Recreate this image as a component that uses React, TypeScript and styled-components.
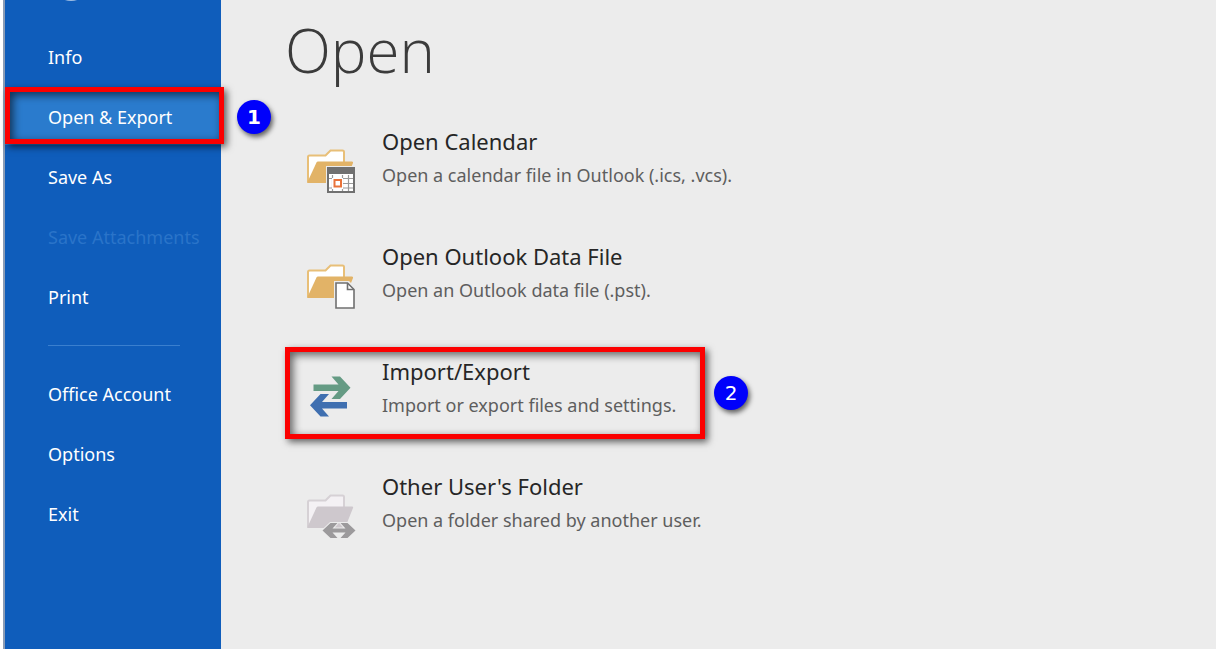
import React from "react";
import styled, { createGlobalStyle } from "styled-components";

const GlobalStyle = createGlobalStyle`
  * { box-sizing: border-box; }
  html, body, #root { height: 100%; }
  body {
    margin: 0;
    background: #ffffff;
    font-family: "Noto Sans", "Open Sans", sans-serif;
  }
  button { font: inherit; border: 0; margin: 0; cursor: pointer; }
  button:disabled { cursor: default; }
`;

const Backstage = styled.div`
  display: flex;
  height: 100%;
  padding: 0 0 1px 3px;
`;

const Sidebar = styled.nav`
  flex: 0 0 218px;
  display: flex;
  flex-direction: column;
  background: #0f5dbb;
  border-left: 2px solid #8b9cb5;
`;

const BackRow = styled.div`
  height: 29px;
  padding-left: 48px;
  overflow: hidden;
  display: flex;
  align-items: flex-start;
`;

const BackButton = styled.button`
  width: 36px;
  height: 36px;
  padding: 0;
  margin-top: -35px;
  border: 2px solid rgba(255, 255, 255, 0.6);
  border-radius: 50%;
  background: transparent;
`;

const NavList = styled.ul`
  display: flex;
  flex-direction: column;
  gap: 4px;
  margin: 0;
  padding: 0;
  list-style: none;
`;

const NavItem = styled.li`
  position: relative;
`;

const NavButton = styled.button<{ $active?: boolean }>`
  display: block;
  width: 100%;
  height: 56px;
  padding: 0 0 0 43px;
  text-align: left;
  white-space: nowrap;
  font-size: 18px;
  line-height: 24px;
  color: #ffffff;
  background: ${(p) => (p.$active ? "#2a7bcd" : "transparent")};
  &:disabled { color: #2a74c9; }
`;

const Divider = styled.hr`
  width: 132px;
  height: 1px;
  margin: 20px 0 20px 43px;
  border: 0;
  background: #3a7fce;
`;

const Content = styled.main`
  flex: 1;
  min-width: 0;
  padding: 10px 0 0 64px;
  background: #ececec;
`;

const Title = styled.h1`
  margin: 0 0 27px;
  font-family: "Open Sans", "Noto Sans", sans-serif;
  font-size: 60px;
  font-weight: 300;
  line-height: 80px;
  color: #3b3b3b;
`;

const ActionList = styled.ul`
  display: flex;
  flex-direction: column;
  align-items: flex-start;
  gap: 23px;
  margin: 0;
  padding: 0;
  list-style: none;
`;

const ActionItem = styled.li`
  position: relative;
`;

const ActionButton = styled.button`
  display: flex;
  align-items: center;
  gap: 26px;
  min-width: 420px;
  height: 92px;
  padding: 0 0 0 21px;
  text-align: left;
  white-space: nowrap;
  background: transparent;
`;

const ActionText = styled.span`
  display: flex;
  flex-direction: column;
  gap: 5px;
  padding-bottom: 11px;
`;

const ActionName = styled.span`
  font-size: 22px;
  line-height: 30px;
  color: #262626;
`;

const ActionHint = styled.span`
  font-size: 18px;
  line-height: 28px;
  color: #5e5e5e;
`;

const IconSvg = styled.svg`
  display: block;
  flex: none;
  width: 50px;
  height: 50px;
  margin-top: 16px;
`;

const Highlight = styled.span<{ $bleed?: boolean }>`
  position: absolute;
  inset: ${(p) => (p.$bleed ? "-2px -3px 1px 0" : "0")};
  border: 5px solid #fb0000;
  box-shadow: 3px 3px 7px rgba(0, 0, 0, 0.6), inset 3px 3px 8px rgba(0, 0, 0, 0.6);
  pointer-events: none;
`;

const StepBadge = styled.span<{ $gap: number; $bold?: boolean }>`
  position: absolute;
  top: 50%;
  left: 100%;
  margin: -17px 0 0 ${(p) => p.$gap}px;
  width: 34px;
  height: 34px;
  border-radius: 50%;
  background: #0000fb;
  color: #ffffff;
  box-shadow: 2px 3px 5px rgba(0, 0, 0, 0.6);
  font-family: "DejaVu Sans", sans-serif;
  font-size: 20px;
  font-weight: ${(p) => (p.$bold ? 700 : 400)};
  line-height: 34px;
  text-align: center;
`;

function Folder({ edge, fill, paper }: { edge: string; fill: string; paper: string }) {
  return (
    <>
      <path
        d="M2 36V11q0-1.500 1.500-1.500H19.500l5-5H36.500q1.500 0 1.500 1.500V17"
        fill={paper}
        stroke={edge}
        strokeWidth="2"
      />
      <path d="M1 37L10.500 16.500q.5-1 1.500-1H46q1.500 0 1 1.500L39 37z" fill={fill} />
    </>
  );
}

function CalendarIcon() {
  return (
    <IconSvg viewBox="0 0 50 50" aria-hidden="true">
      <Folder edge="#e8bf78" fill="#e2b367" paper="#ffffff" />
      <rect x="20" y="20" width="30" height="29" fill="#ececec" />
      <rect x="22" y="22" width="26" height="24" fill="#ffffff" stroke="#707070" strokeWidth="2" />
      <rect x="21" y="21" width="28" height="7" fill="#707070" />
      <path
        d="M26.500 29V45M36.500 29V45M42.500 29V45M23 32.500H47M23 42H47M37 37.500H47"
        stroke="#9a9a9a"
        strokeWidth="1.200"
        fill="none"
      />
      <rect x="26" y="32" width="11" height="11" fill="#ffffff" />
      <rect x="28.500" y="34" width="6.500" height="6.500" fill="#ffffff" stroke="#e8733a" strokeWidth="2" />
    </IconSvg>
  );
}

function DataFileIcon() {
  return (
    <IconSvg viewBox="0 0 50 50" aria-hidden="true">
      <Folder edge="#e8bf78" fill="#e2b367" paper="#ffffff" />
      <path d="M28 20H43L50 27V50H28z" fill="#ececec" />
      <path d="M30 22H41.500L48 28.500V47H30z" fill="#ffffff" stroke="#707070" strokeWidth="1.600" />
      <path d="M41.500 22V28.500H48" fill="none" stroke="#707070" strokeWidth="1.600" />
    </IconSvg>
  );
}

function TransferIcon() {
  return (
    <IconSvg viewBox="0 0 50 50" aria-hidden="true">
      <path d="M7.500 8.500H32.500L25.500 .5H34L44.500 11.700L34 23H25.500L32.500 15H7.500z" fill="#659b84" />
      <path d="M41 26H16L23 18H14.500L4 29.200L14.500 40.500H23L16 32.500H41z" fill="#3f6fb0" />
    </IconSvg>
  );
}

function SharedFolderIcon() {
  return (
    <IconSvg viewBox="0 0 50 50" aria-hidden="true">
      <Folder edge="#d6d1d5" fill="#cec8cd" paper="#f4f1f4" />
      <path
        d="M16.500 39.500L24.500 32H31.500L26.500 37.500H39.500L34.500 32H41.500L49.500 39.500L41.500 47H34.500L39.500 41.500H26.500L31.500 47H24.500z"
        fill="#9c9a9c"
        stroke="#ececec"
        strokeWidth="2"
        paintOrder="stroke"
      />
    </IconSvg>
  );
}

const actions = [
  { name: "Open Calendar", hint: "Open a calendar file in Outlook (.ics, .vcs).", Icon: CalendarIcon },
  { name: "Open Outlook Data File", hint: "Open an Outlook data file (.pst).", Icon: DataFileIcon },
  { name: "Import/Export", hint: "Import or export files and settings.", Icon: TransferIcon, step: 2 },
  { name: "Other User's Folder", hint: "Open a folder shared by another user.", Icon: SharedFolderIcon },
];

const fileCommands = [
  { label: "Info" },
  { label: "Open & Export", step: 1 },
  { label: "Save As" },
  { label: "Save Attachments", disabled: true },
  { label: "Print" },
];

const appCommands = ["Office Account", "Options", "Exit"];

export default function App() {
  return (
    <>
      <GlobalStyle />
      <Backstage>
        <Sidebar aria-label="File">
          <BackRow>
            <BackButton aria-label="Back" />
          </BackRow>
          <NavList>
            {fileCommands.map(({ label, step, disabled }) => (
              <NavItem key={label}>
                <NavButton $active={!!step} disabled={disabled}>{label}</NavButton>
                {step && <Highlight $bleed />}
                {step && <StepBadge $gap={16} $bold>{step}</StepBadge>}
              </NavItem>
            ))}
          </NavList>
          <Divider />
          <NavList>
            {appCommands.map((label) => (
              <NavItem key={label}>
                <NavButton>{label}</NavButton>
              </NavItem>
            ))}
          </NavList>
        </Sidebar>
        <Content>
          <Title>Open</Title>
          <ActionList>
            {actions.map(({ name, hint, Icon, step }) => (
              <ActionItem key={name}>
                <ActionButton>
                  <Icon />
                  <ActionText>
                    <ActionName>{name}</ActionName>
                    <ActionHint>{hint}</ActionHint>
                  </ActionText>
                </ActionButton>
                {step && <Highlight />}
                {step && <StepBadge $gap={9}>{step}</StepBadge>}
              </ActionItem>
            ))}
          </ActionList>
        </Content>
      </Backstage>
    </>
  );
}
